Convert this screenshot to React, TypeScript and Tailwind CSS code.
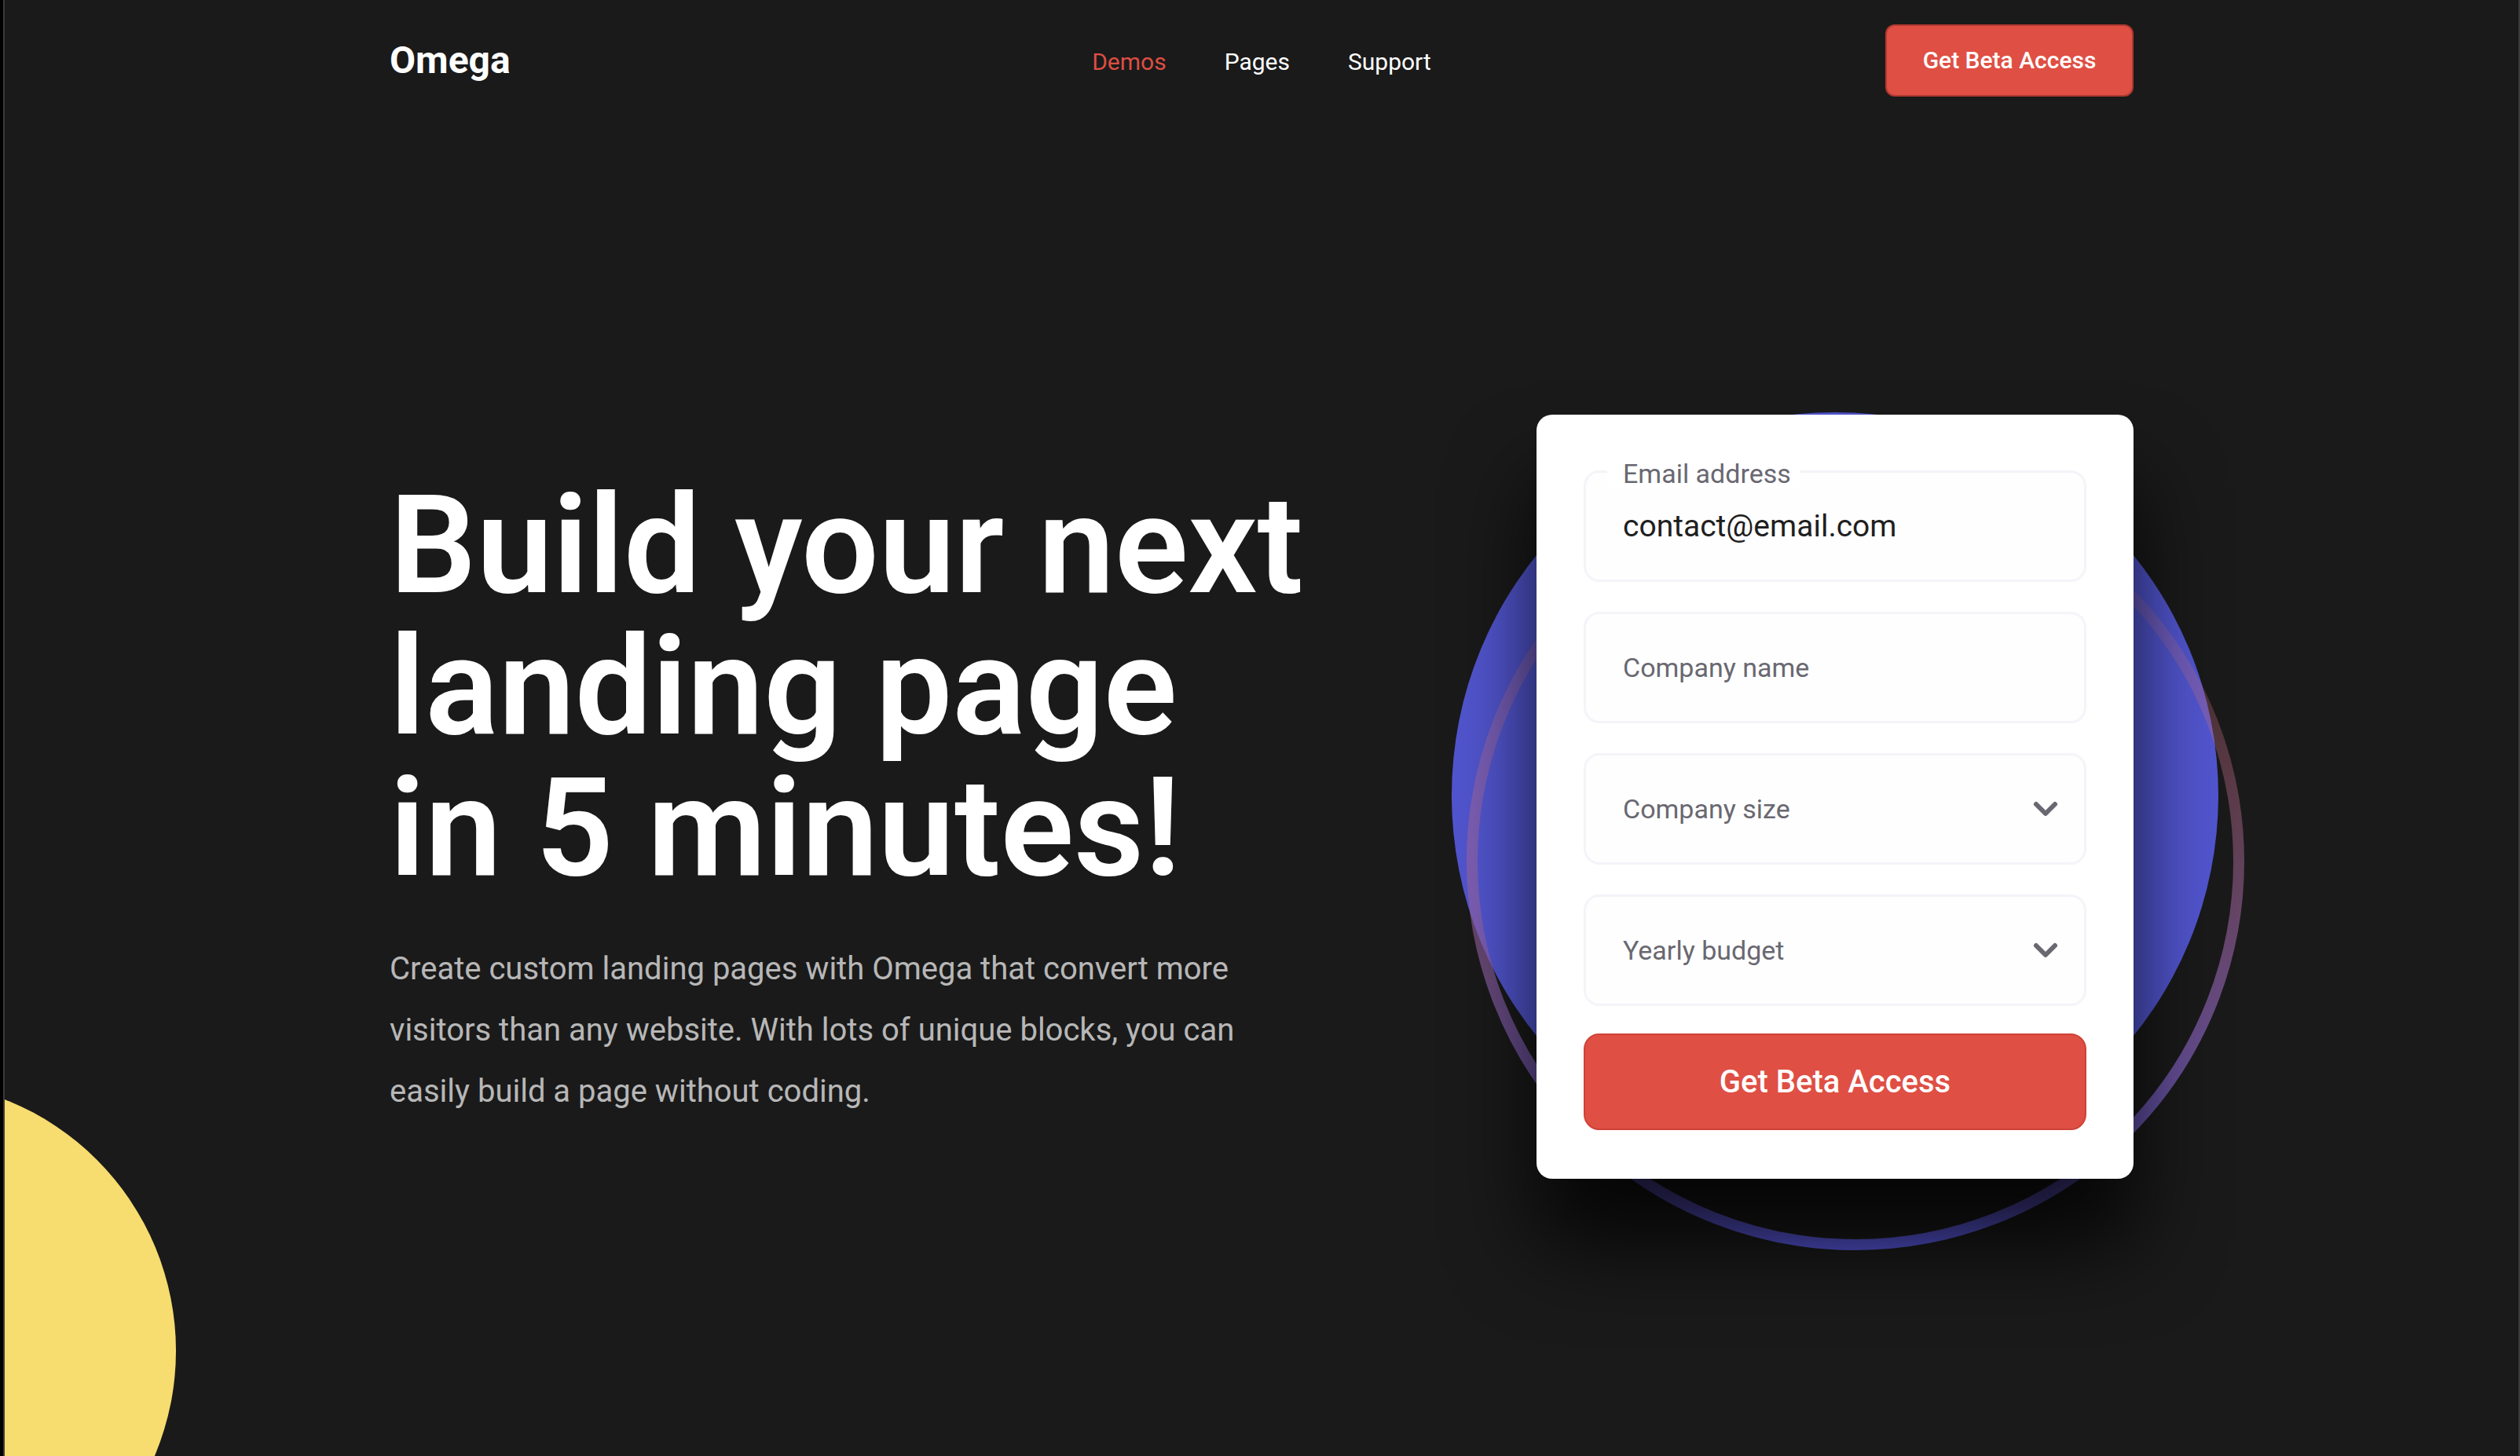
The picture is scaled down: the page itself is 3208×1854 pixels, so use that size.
import { ChevronDown } from "lucide-react";

const navLinks = [
  { label: "Demos", active: true },
  { label: "Pages", active: false },
  { label: "Support", active: false },
];

const fieldBox =
  "block h-[142px] w-full rounded-[20px] border-3 border-[#f4f4f9] bg-[#fefefe] px-[47px] outline-none";

function Header() {
  return (
    <header className="mx-auto grid w-full max-w-[2220px] grid-cols-[1fr_auto_1fr] items-center pt-[31px]">
      <a href="#" className="justify-self-start text-[48px] leading-[56px] font-bold text-white">
        Omega
      </a>
      <nav className="flex gap-[74px] pt-1 text-[30px] leading-[36px]">
        {navLinks.map((link) => (
          <a key={link.label} href="#" className={link.active ? "text-[#de4e43]" : "text-white"}>
            {link.label}
          </a>
        ))}
      </nav>
      <button
        type="button"
        className="h-[92px] w-[316px] justify-self-end rounded-xl border-2 border-[#b0382f] bg-[#df4f44] text-[30px] leading-[36px] font-medium text-white"
      >
        Get Beta Access
      </button>
    </header>
  );
}

function Ornament() {
  return (
    <svg
      aria-hidden="true"
      className="pointer-events-none absolute top-0 left-0 -z-10 h-[973px] w-[760px] overflow-visible"
      viewBox="0 0 760 973"
    >
      <defs>
        <linearGradient id="ring" x1="0" y1="0" x2="0" y2="1">
          <stop offset="0" stopColor="#ff7c5c" stopOpacity="0" />
          <stop offset="1" stopColor="#5454d4" />
        </linearGradient>
      </defs>
      <circle cx="380" cy="485" r="488" fill="#5256d0" />
      <circle cx="406" cy="569" r="488" fill="none" stroke="url(#ring)" strokeWidth="14" />
    </svg>
  );
}

function SelectField({ label, options }: { label: string; options: string[] }) {
  return (
    <div className="relative">
      <select
        aria-label={label}
        defaultValue=""
        className={`${fieldBox} appearance-none text-[34px] leading-[40px] text-[#696871]`}
      >
        <option value="">{label}</option>
        {options.map((option) => (
          <option key={option}>{option}</option>
        ))}
      </select>
      <ChevronDown
        strokeWidth={3}
        className="pointer-events-none absolute top-1/2 right-7 size-12 -translate-y-1/2 text-[#696871]"
      />
    </div>
  );
}

function SignupForm() {
  return (
    <div className="relative isolate w-[760px] shrink-0">
      <Ornament />
      <form
        className="rounded-[20px] bg-white px-[60px] pt-[71px] pb-[62px] shadow-[0_84px_110px_rgba(0,0,0,0.8)]"
        onSubmit={(event) => event.preventDefault()}
      >
        <div className="flex flex-col gap-[38px]">
          <div className="relative">
            <input
              id="email"
              type="email"
              defaultValue="contact@email.com"
              className={`${fieldBox} text-[39px] leading-[46px] text-[#1f1f1f]`}
            />
            <label
              htmlFor="email"
              className="absolute -top-4 left-[30px] bg-white pr-3 pl-5 text-[34px] leading-[40px] text-[#696871]"
            >
              Email address
            </label>
          </div>
          <input
            type="text"
            aria-label="Company name"
            placeholder="Company name"
            className={`${fieldBox} text-[34px] leading-[40px] text-[#1f1f1f] placeholder:text-[#696871]`}
          />
          <SelectField label="Company size" options={["1–10", "11–50", "51–200"]} />
          <SelectField label="Yearly budget" options={["$1,000", "$10,000", "$50,000"]} />
        </div>
        <button
          type="submit"
          className="mt-[35px] block h-[123px] w-full rounded-[20px] border-2 border-[#cf4237] bg-[#df4f44] text-[40px] leading-[48px] font-medium text-white"
        >
          Get Beta Access
        </button>
      </form>
    </div>
  );
}

export default function App() {
  return (
    <div className="border-l-4 border-black font-['Roboto',sans-serif]">
      <div className="relative isolate min-h-screen overflow-hidden border-x-2 border-[#3a3a3a] bg-[#1a1a1a]">
        <div
          aria-hidden="true"
          className="absolute -bottom-[210px] -left-[470px] -z-10 size-[688px] rounded-full bg-[#f7dc6f]"
        />
        <Header />
        <main className="mx-auto flex w-full max-w-[2220px] items-center justify-between pt-[405px]">
          <div className="pt-1">
            <h1 className="text-[174px] leading-[180px] font-semibold text-white">
              Build your next
              <br />
              landing page
              <br />
              in 5 minutes!
            </h1>
            <p className="mt-[50px] max-w-[1100px] text-[40px] leading-[78px] text-white/70">
              Create custom landing pages with Omega that convert more visitors than any website. With lots of
              unique blocks, you can easily build a page without coding.
            </p>
          </div>
          <SignupForm />
        </main>
      </div>
    </div>
  );
}
